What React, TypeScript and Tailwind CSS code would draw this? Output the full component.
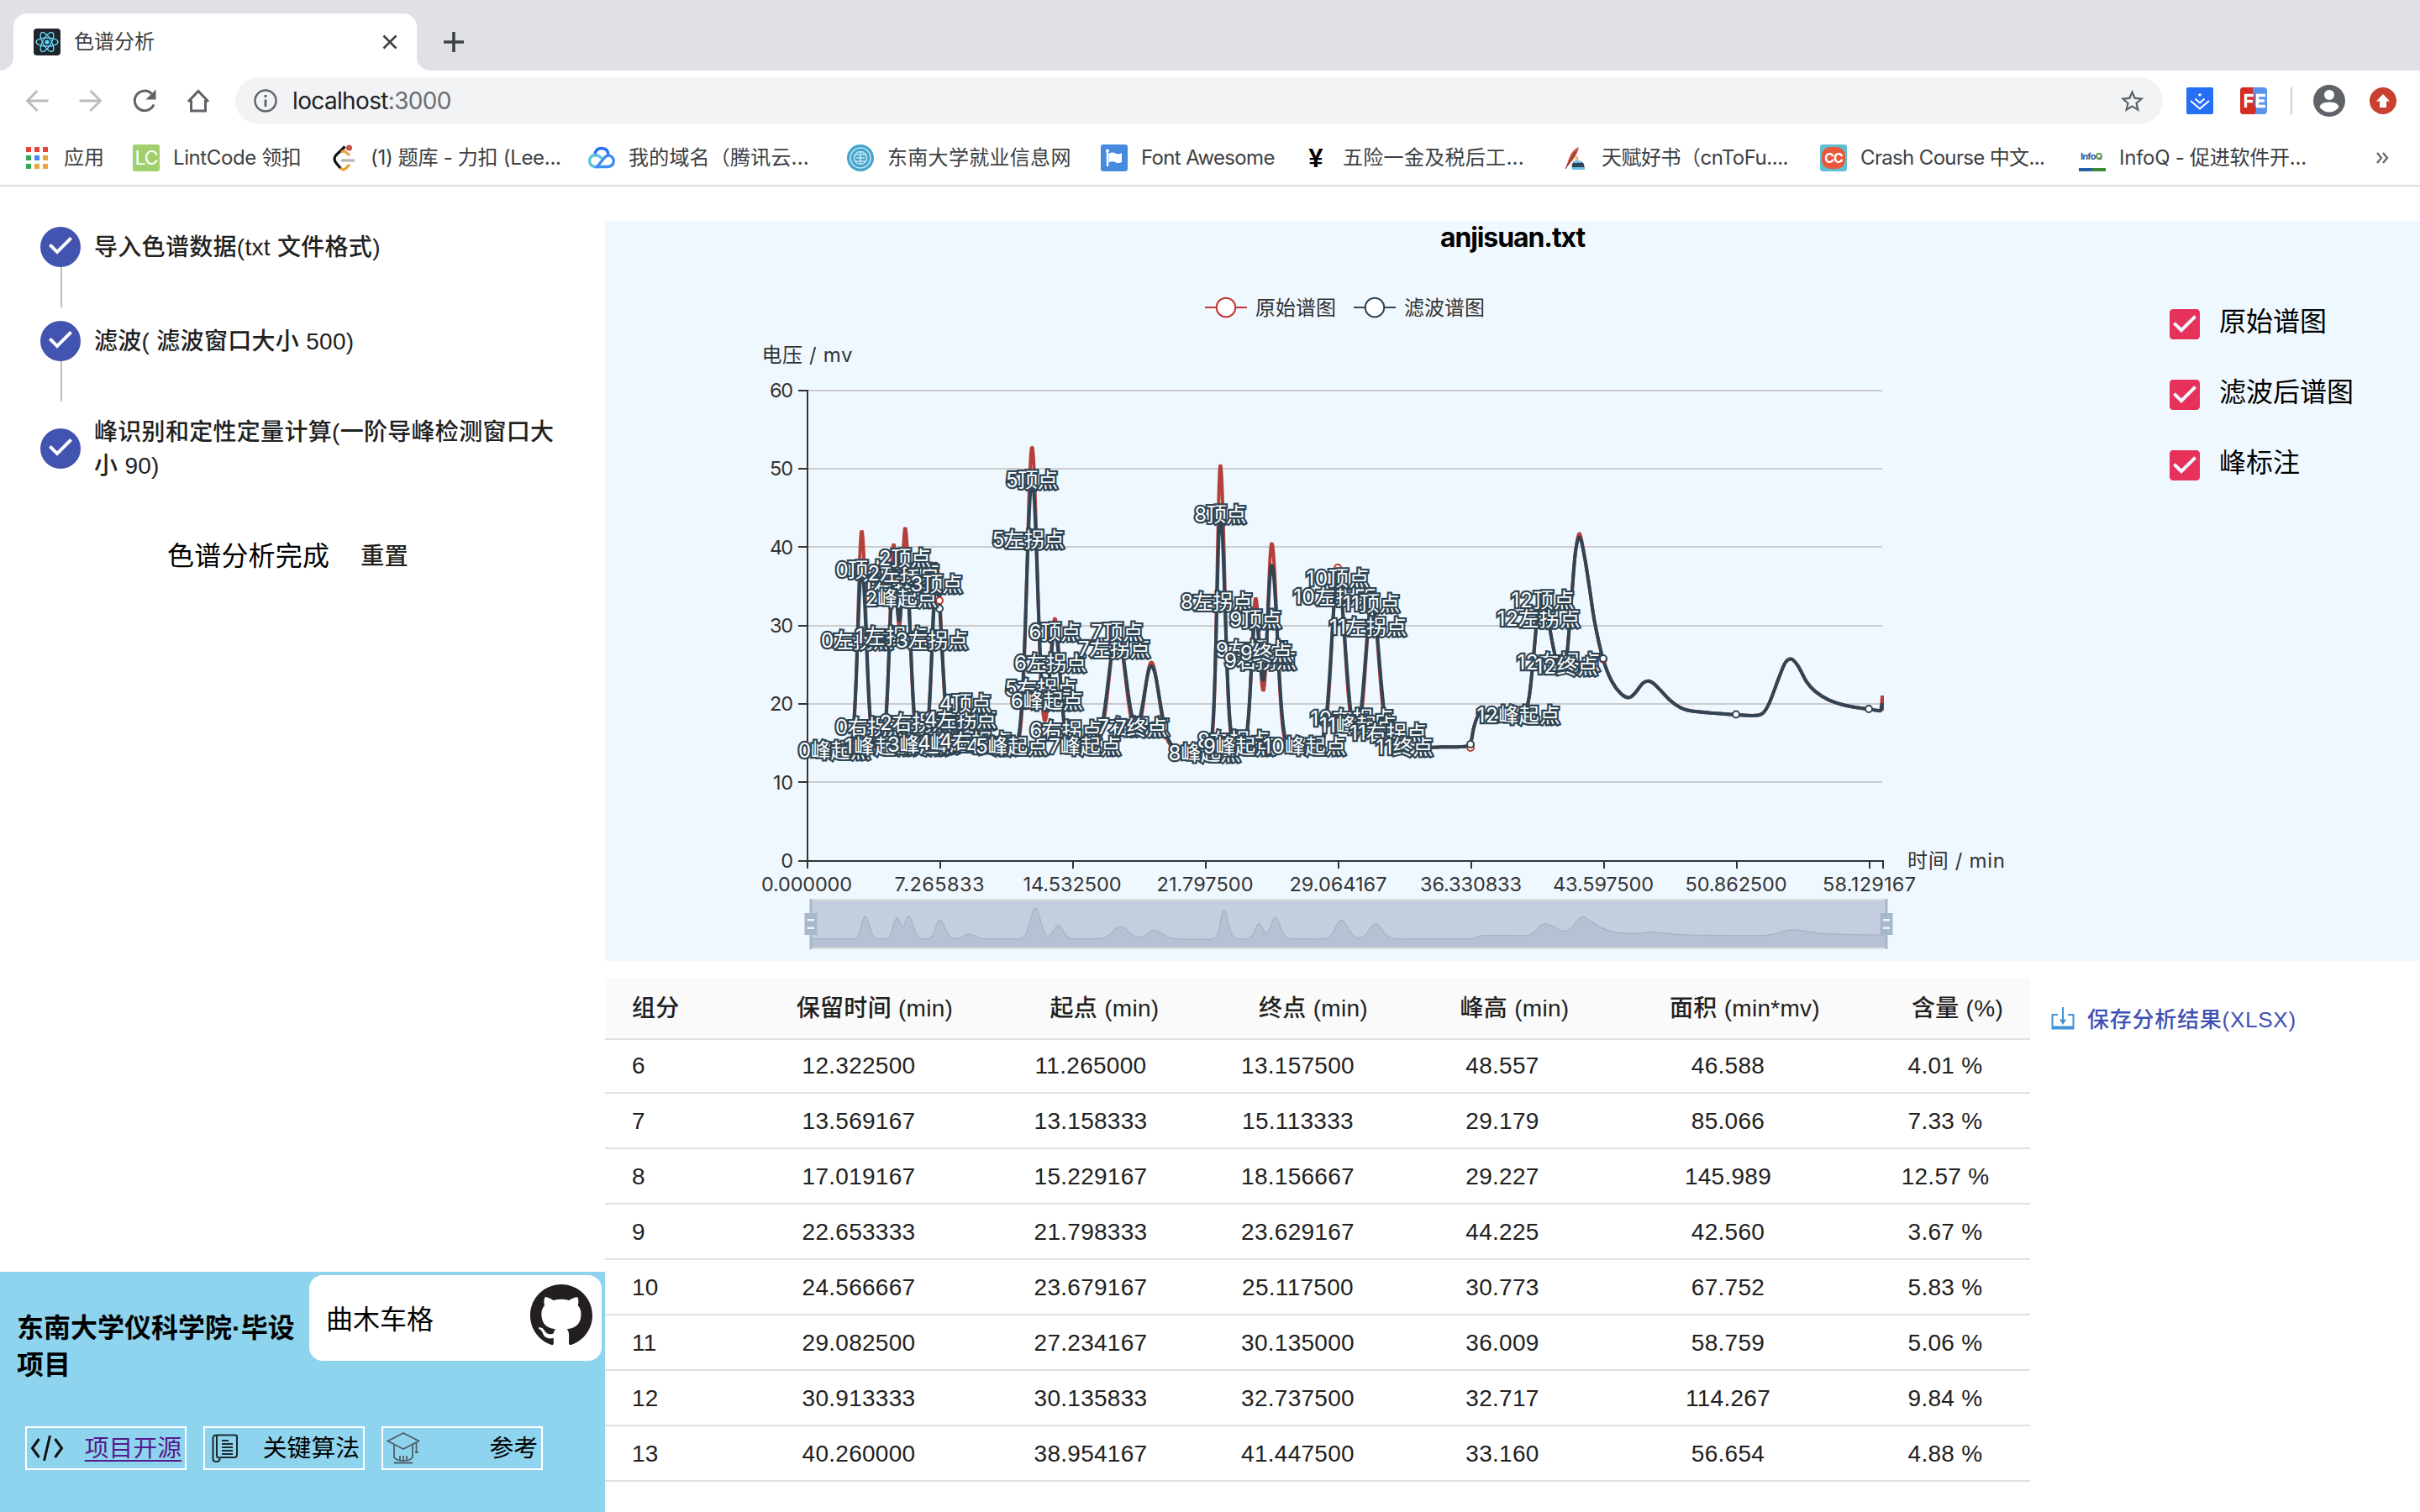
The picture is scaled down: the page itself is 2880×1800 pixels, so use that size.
import React from "react";

/* ---------- chromatogram data ---------- */

type Peak = { x: number; red: number; navy: number; l: number; r: number };

const PEAKS: Peak[] = [
  { x: 1025.5, red: 42.1, navy: 37.4, l: 4.6, r: 5.2 },
  { x: 1063.5, red: 40.2, navy: 36.3, l: 4.8, r: 4.6 },
  { x: 1077.3, red: 42.3, navy: 38.3, l: 4.6, r: 5.6 },
  { x: 1114.4, red: 38, navy: 35.4, l: 5, r: 6.4 },
  { x: 1148.8, red: 20.3, navy: 20, l: 6.5, r: 8 },
  { x: 1228.2, red: 52.8, navy: 48.6, l: 6.2, r: 6.4 },
  { x: 1255.4, red: 30.9, navy: 29.2, l: 6, r: 6.2 },
  { x: 1329.3, red: 29.5, navy: 29.2, l: 9.6, r: 10.4 },
  { x: 1370.2, red: 25.3, navy: 24.8, l: 8.6, r: 9.4 },
  { x: 1452.3, red: 50.4, navy: 44.2, l: 4, r: 5.3 },
  { x: 1494.3, red: 33.4, navy: 30.8, l: 4.9, r: 5.3 },
  { x: 1513.5, red: 40.4, navy: 37.6, l: 5.3, r: 6.4 },
  { x: 1592.1, red: 37.4, navy: 36, l: 7.2, r: 8.4 },
  { x: 1632.8, red: 33, navy: 32.7, l: 7.6, r: 8.4 },
];

const TAIL: [number, number][] = [
  [1716, 14.5], [1735, 14.5], [1749, 14.8], [1754, 17], [1760, 18.6], [1772, 18.8], [1790, 18.7], [1808, 18.6],
  [1815, 19], [1820, 21], [1825, 26], [1830, 31.5], [1835, 33.4], [1841, 31.5], [1848, 27.5], [1854, 24.8],
  [1860, 24.4], [1865, 26.5], [1871, 34.5], [1875, 39.4], [1880, 41.2], [1886, 38.6], [1892, 34.5], [1898, 30.3],
  [1907.8, 25.7], [1918, 22.9], [1929, 21.3], [1938.6, 20.8], [1946, 21.4], [1955, 22.6], [1962, 22.9], [1970, 22.4],
  [1987, 20.5], [2000, 19.5], [2012, 19.1], [2040, 18.8], [2066, 18.6], [2088, 18.5], [2098, 18.8], [2106, 20.2],
  [2118, 23.6], [2125, 25.3], [2132, 25.7], [2140, 24.8], [2150, 22.8], [2160, 21.6], [2176, 20.5], [2196, 19.8],
  [2224, 19.3], [2238, 19.1],
];

const yOf = (v: number) => 1024.5 - v * 9.333;

function valueAt(x: number, kind: "red" | "navy") {
  const base = x < 1400 ? 14.3 : x < 1440 ? 14.1 : 14.4;
  const widen = kind === "red" ? 0.95 : 1.04;
  let v = base;
  for (const p of PEAKS) {
    const s = (x < p.x ? p.l : p.r) * widen;
    v += (p[kind] - 14.3) * Math.exp(-0.5 * ((x - p.x) / s) ** 2);
  }
  return v;
}

function curve(kind: "red" | "navy", fx: (x: number) => number, fy: (v: number) => number) {
  const parts: string[] = [];
  for (let x = 961; x <= 1700; x += 0.75) {
    parts.push(`${parts.length ? "L" : "M"}${fx(x).toFixed(2)} ${fy(valueAt(x, kind)).toFixed(2)}`);
  }
  const lift = (v: number) => (kind === "red" && v > 40 ? v + 0.5 : v);
  const pts = TAIL.map(([x, v]) => [fx(x), fy(lift(v))]);
  parts.push(`L${pts[0][0]} ${pts[0][1]}`);
  for (let i = 0; i < pts.length - 1; i++) {
    const a = pts[Math.max(i - 1, 0)];
    const b = pts[i];
    const c = pts[i + 1];
    const d = pts[Math.min(i + 2, pts.length - 1)];
    parts.push(
      `C${b[0] + (c[0] - a[0]) / 6} ${b[1] + (c[1] - a[1]) / 6} ${c[0] - (d[0] - b[0]) / 6} ${c[1] - (d[1] - b[1]) / 6} ${c[0]} ${c[1]}`
    );
  }
  return parts.join("");
}

const id = (x: number) => x;
const RED = curve("red", id, yOf);
const NAVY = curve("navy", id, yOf);
const SLIDER = curve("red", (x) => x + 4, (v) => 1131.6 - v * 0.96);

const MARKS: [string, number, number][] = [
  ["0峰起点", 993, 893], ["0左拐点", 1020, 762], ["0顶点", 1025.5, 678], ["0右拐点", 1037, 865],
  ["1峰起点", 1048, 888], ["1左拐点", 1061, 757], ["1顶点", 1063.5, 687], ["1右拐点", 1070.5, 697],
  ["1终点", 1084, 680], ["2峰起点", 1072.5, 712], ["2左拐点", 1075.6, 682], ["2顶点", 1077, 664],
  ["2右拐点", 1090, 860], ["2终点", 1098, 888], ["3峰起点", 1099, 886], ["3左拐点", 1109, 762],
  ["3顶点", 1114.5, 695], ["3右拐点", 1143, 857], ["4峰起点", 1135, 884], ["4左拐点", 1143, 856],
  ["4顶点", 1148.8, 837], ["4右拐点", 1161, 882], ["4终点", 1181, 888], ["5峰起点", 1204, 888],
  ["5左拐点", 1223.7, 642], ["5顶点", 1228, 571], ["5右拐点", 1239, 819], ["5终点", 1244, 834],
  ["6峰起点", 1246, 834], ["6左拐点", 1250, 789], ["6顶点", 1255.4, 752], ["6右拐点", 1268.4, 869],
  ["7峰起点", 1291, 888], ["7左拐点", 1326, 772], ["7顶点", 1329.6, 752], ["7右拐点", 1349, 865],
  ["7终点", 1358, 866], ["8峰起点", 1433.6, 896], ["8左拐点", 1448, 716], ["8顶点", 1452.3, 612],
  ["8右拐点", 1468, 881], ["9峰起点", 1475, 888], ["9左拐点", 1490, 773], ["9顶点", 1494.3, 737],
  ["9右拐点", 1500, 786], ["9终点", 1507, 777], ["10峰起点", 1552.6, 888], ["10左拐点", 1588.7, 710],
  ["10顶点", 1592, 688], ["10右拐点", 1609, 855], ["11峰起点", 1616, 863], ["11左拐点", 1628, 746],
  ["11顶点", 1632, 718], ["11右拐点", 1652, 872], ["11终点", 1671.6, 889], ["12峰起点", 1807, 851],
  ["12左拐点", 1831, 736], ["12顶点", 1836, 714], ["12右拐点", 1855, 788], ["12终点", 1864, 793],
];

const X_TICKS: [number, string, number][] = [
  [960, "0.000000", 108], [1118, "7.265833", 107], [1276, "14.532500", 117], [1434, "21.797500", 115],
  [1592.500, "29.064167", 116], [1750.500, "36.330833", 121], [1908, "43.597500", 120], [2066, "50.862500", 121],
  [2224.500, "58.129167", 111],
];

const DOTS: [number, number, string][] = [
  [1118, 715, "#c23531"], [1592, 676, "#c23531"], [1750, 890, "#c23531"], [1908, 785, "#c23531"],
  [1118, 724.5, "#2f4554"], [1750, 886, "#2f4554"], [1908, 784, "#2f4554"], [2066, 850.5, "#2f4554"],
  [2224, 844, "#2f4554"],
];

function Handle({ x }: { x: number }) {
  return (
    <g>
      <rect x={x - 1.5} y={1070} width={3} height={60} fill="#a7b7cc" />
      <rect x={x - 7.5} y={1087} width={15} height={26} fill="#a7b7cc" />
      <rect x={x - 4} y={1094} width={8} height={2.5} fill="#eef3fa" />
      <rect x={x - 4} y={1103.5} width={8} height={2.5} fill="#eef3fa" />
    </g>
  );
}

function Chart() {
  return (
    <svg
      viewBox="720 308 1856 836"
      className="h-[836px] w-[1856px] shrink-0 font-['Inter','Noto_Sans_CJK_SC',sans-serif] text-[24px]"
    >
      <g strokeWidth={2} fill="#fff">
        <path d="M1434 366h50" stroke="#c23531" />
        <circle cx={1459} cy={366} r={11.3} stroke="#c23531" />
        <path d="M1611 366h50" stroke="#2f4554" />
        <circle cx={1636} cy={366} r={11.3} stroke="#2f4554" />
      </g>
      <g fill="#333">
        <text x={1494} y={375}>原始谱图</text>
        <text x={1671} y={375}>滤波谱图</text>
        <text x={960.5} y={431} textAnchor="middle" textLength={108}>电压 / mv</text>
        <text x={2270} y={1033} textLength={116}>时间 / min</text>
      </g>

      {[10, 20, 30, 40, 50, 60].map((v) => (
        <path key={v} d={`M961 ${Math.round(1024.5 - v * 9.333)}h1279`} stroke="#ccc" strokeWidth={2} />
      ))}
      <path
        d="M961 464V1034M950 1025H2241M950 931h11M950 838h11M950 745h11M950 651h11M950 558h11M950 465h11M1119 1025v9M1277 1025v9M1435 1025v9M1593 1025v9M1751 1025v9M1909 1025v9M2067 1025v9M2225 1025v9M2241 1024v10"
        stroke="#333"
        strokeWidth={2}
        fill="none"
      />
      <g fill="#333" fontSize={23.5}>
        {[0, 10, 20, 30, 40, 50, 60].map((v) => (
          <text key={v} x={944} y={1033 - v * 9.333} textAnchor="end" textLength={v === 0 ? 14 : v === 10 ? 24 : 28}>
            {v}
          </text>
        ))}
        {X_TICKS.map(([x, t, w]) => (
          <text key={t} x={x} y={1061} textAnchor="middle" textLength={w}>
            {t}
          </text>
        ))}
      </g>

      <path d={`${RED}L2239 845L2240 828V846`} fill="none" stroke="#b5403a" strokeWidth={4} strokeLinejoin="bevel" />
      <path d={`${NAVY}L2240 837`} fill="none" stroke="#2f4554" strokeWidth={4} strokeLinejoin="bevel" />
      {DOTS.map(([x, y, c], i) => (
        <circle key={i} cx={x} cy={y} r={4} fill="#fff" stroke={c} strokeWidth={2} />
      ))}
      <g
        fill="#fff"
        stroke="#2f4554"
        strokeWidth={4.5}
        strokeLinejoin="miter"
        paintOrder="stroke"
        textAnchor="middle"
      >
        {MARKS.map(([t, x, y]) => (
          <text key={t} x={x} y={y + 8.5} textLength={t.length * 24 - (/^\d\d/.test(t) ? (t.startsWith("11") ? 28 : 21) : 10)}>
            {t}
          </text>
        ))}
      </g>

      <rect x={965} y={1071} width={1280} height={58} fill="#c5cedf" stroke="#ddd" strokeWidth={2} />
      <path d={`${SLIDER}L2244 1113V1128H966Z`} fill="#b6c2d3" />
      <path d={SLIDER} fill="none" stroke="#a3b2c4" strokeWidth={1.2} />
      <Handle x={965} />
      <Handle x={2245} />
    </svg>
  );
}

/* ---------- browser chrome ---------- */

function TabStrip() {
  return (
    <div className="flex h-[84px] items-end bg-[#dfe1e7]">
      <div className="h-4 w-4 bg-white">
        <div className="h-full w-full rounded-br-2xl bg-[#dfe1e7]" />
      </div>
      <div className="flex h-[68px] w-[480px] items-center rounded-t-2xl bg-white pr-[22px] pl-6">
        <svg viewBox="0 0 32 32" className="h-8 w-8">
          <rect width="32" height="32" rx="4" fill="#20232a" />
          <g fill="none" stroke="#61dafb" strokeWidth="1.4">
            <ellipse cx="16" cy="16" rx="13" ry="5" />
            <ellipse cx="16" cy="16" rx="13" ry="5" transform="rotate(60 16 16)" />
            <ellipse cx="16" cy="16" rx="13" ry="5" transform="rotate(120 16 16)" />
          </g>
          <circle cx="16" cy="16" r="2.6" fill="#61dafb" />
        </svg>
        <span className="ml-4 flex-1 text-[24px] leading-none text-[#3c4043]">色谱分析</span>
        <svg viewBox="0 0 20 20" className="h-5 w-5">
          <path d="M2.5 2.5l15 15M17.500 2.500l-15 15" stroke="#3c4043" strokeWidth="2.600" />
        </svg>
      </div>
      <div className="h-4 w-4 bg-white">
        <div className="h-full w-full rounded-bl-2xl bg-[#dfe1e7]" />
      </div>
      <svg viewBox="0 0 24 24" className="mb-[22px] ml-4 h-6 w-6">
        <path d="M12 0v24M0 12h24" stroke="#3c4043" strokeWidth="3.6" />
      </svg>
    </div>
  );
}

function Toolbar() {
  return (
    <div className="flex h-[72px] items-center bg-white">
      <div className="flex w-[280px] items-center gap-8 pl-7">
        <svg viewBox="0 0 32 32" className="h-8 w-8" fill="none" stroke="#b9bbbe" strokeWidth="2.8">
          <path d="M29.500 16H5M16.500 4L4.500 16l12 12" />
        </svg>
        <svg viewBox="0 0 32 32" className="h-8 w-8" fill="none" stroke="#b9bbbe" strokeWidth="2.8">
          <path d="M2.500 16H27M15.500 4l12 12-12 12" />
        </svg>
        <svg viewBox="0 0 32 32" className="h-8 w-8" fill="none" stroke="#5f6368" strokeWidth="3">
          <path d="M27 20.500A11.800 11.800 0 1 1 24.500 7.600" />
          <path d="M29.500 2.500v12h-12z" fill="#5f6368" stroke="none" />
        </svg>
        <svg viewBox="0 0 32 32" className="h-8 w-8" fill="none" stroke="#5f6368" strokeWidth="3">
          <path d="M4 17L16 4.500 28 17M7.500 15v13h17V15" />
        </svg>
      </div>
      <div className="flex h-14 w-[2294px] items-center rounded-full bg-[#f1f3f4] pr-5 pl-[22px]">
        <svg viewBox="0 0 28 28" className="h-7 w-7">
          <circle cx="14" cy="14" r="12.500" fill="none" stroke="#5f6368" strokeWidth="2.400" />
          <path d="M14 12.500v8.500M14 7v3" stroke="#5f6368" strokeWidth="2.800" />
        </svg>
        <span className="ml-[18px] flex-1 text-[28px] leading-none tracking-[-0.65px] text-[#202124]">
          localhost<span className="text-[#6b6f74]">:3000</span>
        </span>
        <svg viewBox="0 0 24 24" className="h-[33px] w-[33px]">
          <path
            fill="#5f6368"
            d="M22 9.240l-7.190-.62L12 2 9.190 8.630 2 9.240l5.460 4.730L5.820 21 12 17.270 18.180 21l-1.630-7.030L22 9.240zM12 15.400l-3.760 2.270 1-4.280-3.320-2.880 4.380-.38L12 6.100l1.710 4.040 4.380.38-3.320 2.880 1 4.280L12 15.400z"
          />
        </svg>
      </div>
      <div className="flex flex-1 items-center pl-7">
        <svg viewBox="0 0 32 32" className="h-8 w-8" fill="none" stroke="#fff" strokeWidth="2">
          <rect width="32" height="32" rx="2" fill="#256ff5" stroke="none" />
          <path d="M5 16l11 9.500L27 16M10.500 13.500L16 18.500l5.500-5" />
          <circle cx="16" cy="9" r="1.800" fill="#fff" stroke="none" />
        </svg>
        <svg viewBox="0 0 32 32" className="ml-8 h-8 w-8">
          <rect width="32" height="32" rx="4" fill="#5a93ee" />
          <path d="M4 0h12q-3 4 1 8v14q4 4 0 10H4q-4 0-4-4V4q0-4 4-4z" fill="#d62d20" />
          <path d="M6.500 24V9.500H16M6.500 16.500H15M30 9.500H20.500V22.500H30M20.500 16H29" fill="none" stroke="#fff" strokeWidth="3.400" />
        </svg>
        <div className="ml-7 h-8 w-0.5 bg-[#cfd1d4]" />
        <svg viewBox="0 0 38 38" className="ml-[25px] h-[38px] w-[38px]">
          <circle cx="19" cy="19" r="19" fill="#5f6368" />
          <circle cx="19" cy="12" r="6" fill="#fff" />
          <path d="M7.500 26.500q1-6 11.500-6t11.500 6q-4.500 6-11.500 6t-11.500-6z" fill="#fff" />
        </svg>
        <svg viewBox="0 0 32 32" className="ml-[29px] h-8 w-8">
          <circle cx="16" cy="16" r="16" fill="#c8402f" />
          <path d="M16 8l8 8.500h-4V24h-8v-7.500H8z" fill="#fff" />
        </svg>
      </div>
    </div>
  );
}

const AppsIcon = (
  <svg viewBox="0 0 32 32" className="h-8 w-8">
    {["#e94235", "#e94235", "#e94235", "#34a853", "#4285f4", "#eba53a", "#34a853", "#eba53a", "#eba53a"].map((c, i) => (
      <rect key={i} x={3 + (i % 3) * 10} y={3 + Math.floor(i / 3) * 10} width="6" height="6" fill={c} />
    ))}
  </svg>
);

const LintIcon = (
  <div className="flex h-8 w-8 items-center justify-center rounded-[3px] bg-[#a2cf6e] text-[23px] leading-none tracking-[-1px] text-white">
    LC
  </div>
);

const LeetIcon = (
  <svg viewBox="0 0 32 32" className="h-8 w-8" fill="none" strokeWidth="3.200">
    <path d="M17.500 2.500L7 12.500q-4 4.500 0 9.500l5.500 6.500" stroke="#111" />
    <path d="M12 28q3 3 6 1l5-5M13 9l3.500-1.500L23 13" stroke="#eba13c" />
    <path d="M13 19h16" stroke="#b3b3b3" />
    <circle cx="22.500" cy="4" r="3.500" fill="#c4524b" />
  </svg>
);

const CloudIcon = (
  <svg viewBox="0 0 32 32" className="h-8 w-8" fill="none" strokeWidth="3.400">
    <path d="M8 13q0-8.500 8-8.500T24 13" stroke="#2a6df4" />
    <path d="M14 26.500H9q-7.300-.5-7.300-7T9 12.800q4 0 7 4" stroke="#5cc5dd" />
    <path d="M10.500 26.500L20 15q3-2.500 6-1.500 4.500 2 4.300 6.500-.5 6-7 6.500z" stroke="#3f8df5" />
  </svg>
);

const GlobeIcon = (
  <svg viewBox="0 0 32 32" className="h-8 w-8" fill="none" stroke="#bfe6f3" strokeWidth="1.600">
    <circle cx="16" cy="16" r="16" fill="#45a3cc" stroke="none" />
    <circle cx="16" cy="16" r="12" />
    <circle cx="16" cy="16" r="7.500" />
    <path d="M9 12h14M9 20h14M16 9v14M11 16h10" />
  </svg>
);

const FlagIcon = (
  <svg viewBox="0 0 32 32" className="h-8 w-8">
    <rect width="32" height="32" rx="3" fill="#448ade" />
    <path d="M8 8v18" stroke="#fff" strokeWidth="2.400" />
    <circle cx="8" cy="7.500" r="2" fill="#fff" />
    <path d="M9.500 11q4-2.500 8-.5t7.500-.5v11q-4 2-7.500.2t-8 .3z" fill="#fff" />
  </svg>
);

const YenIcon = (
  <div className="flex h-8 w-8 items-center justify-center font-['Liberation_Sans',sans-serif] text-[31px] leading-none font-bold text-black">
    ¥
  </div>
);

const QuillIcon = (
  <svg viewBox="0 0 32 32" className="h-8 w-8">
    <path d="M21 3q-8 3-12 14L5 29l9-11q5-6 7-15z" fill="#c9523f" />
    <path d="M5 29L17 9" stroke="#5d2a20" strokeWidth="1" />
    <path d="M17 14l3 0 1 6h-4z" fill="#e9b894" />
    <path d="M14 21h11q3 2 2.500 8.500H13q-1-5 1-8.500z" fill="#2f4257" />
    <path d="M13 27h15v3H13z" fill="#66bde8" />
    <path d="M14 19.500h10v2.500H14z" fill="#66bde8" />
  </svg>
);

const CcIcon = (
  <div className="flex h-8 w-8 items-center justify-center rounded-[3px] bg-[#5dc0d2]">
    <div className="flex h-[26px] w-7 items-center justify-center rounded-[10px] bg-[#e9573f] text-[16px] leading-none font-bold tracking-[-1px] text-white">
      CC
    </div>
  </div>
);

const InfoIcon = (
  <div className="flex h-8 w-8 flex-col justify-end text-[11px] leading-none font-bold tracking-[-0.8px] text-[#255b9c]">
    <span className="pl-0.5">
      Info<span className="text-[#3d8a3b]">Q</span>
    </span>
    <div className="mt-2 flex h-1">
      <div className="flex-1 bg-[#2b60a0]" />
      <div className="flex-1 bg-[#3d8a3b]" />
    </div>
  </div>
);

function Bookmark({ icon, children, className }: { icon: React.ReactNode; children: React.ReactNode; className: string }) {
  return (
    <div className={`flex shrink-0 items-center gap-4 whitespace-nowrap ${className}`}>
      {icon}
      <span className="leading-none">{children}</span>
    </div>
  );
}

function Bookmarks() {
  return (
    <div className="flex h-[66px] items-center border-b-2 border-[#dcdce3] bg-white pl-7 text-[24px] text-[#3c4043]">
      <Bookmark icon={AppsIcon} className="w-[130px]">应用</Bookmark>
      <Bookmark icon={LintIcon} className="w-[235px] tracking-[-0.4px]">LintCode 领扣</Bookmark>
      <Bookmark icon={LeetIcon} className="w-[307px] tracking-[-0.3px]">(1) 题库 - 力扣 (Lee...</Bookmark>
      <Bookmark icon={CloudIcon} className="w-[308px] tracking-[0.2px]">我的域名（腾讯云...</Bookmark>
      <Bookmark icon={GlobeIcon} className="w-[302px] tracking-[0.3px]">东南大学就业信息网</Bookmark>
      <Bookmark icon={FlagIcon} className="w-[240px] tracking-[-0.65px]">Font Awesome</Bookmark>
      <Bookmark icon={YenIcon} className="w-[308px] tracking-[0.3px]">五险一金及税后工...</Bookmark>
      <Bookmark icon={QuillIcon} className="w-[308px] tracking-[-0.5px]">天赋好书（cnToFu....</Bookmark>
      <Bookmark icon={CcIcon} className="w-[308px] tracking-[-0.65px]">Crash Course 中文...</Bookmark>
      <Bookmark icon={InfoIcon} className="w-[353px] tracking-[-0.25px]">InfoQ - 促进软件开...</Bookmark>
      <svg viewBox="0 0 16 16" className="h-4 w-4" fill="none" stroke="#5f6368" strokeWidth="2.200">
        <path d="M2 2l5 6-5 6M9 2l5 6-5 6" />
      </svg>
    </div>
  );
}

/* ---------- side panel ---------- */

function StepIcon() {
  return (
    <svg viewBox="0 0 24 24" className="h-12 w-12 shrink-0">
      <circle cx="12" cy="12" r="12" fill="#4253b0" />
      <path d="M10 16.400l-5-5 1.400-1.400 3.600 3.600 7.600-7.600L19 7.400z" fill="#fff" />
    </svg>
  );
}

function Step({ children }: { children: React.ReactNode }) {
  return (
    <div className="flex items-center gap-4">
      <StepIcon />
      <span className="translate-y-px text-[28px] leading-[40px] font-medium tracking-[0.3px] text-[#212121]">{children}</span>
    </div>
  );
}

function Connector() {
  return <div className="mb-4 ml-6 h-12 w-0.5 bg-[#bdbdbd]" />;
}

function FooterButton({ icon, children, link }: { icon: React.ReactNode; children: React.ReactNode; link?: boolean }) {
  return (
    <div className="flex h-[52px] w-48 items-center justify-between border-2 border-white px-1">
      {icon}
      <span className={`text-[28.8px] leading-none ${link ? "text-[#551a8b] underline decoration-2 underline-offset-4" : "text-black"}`}>
        {children}
      </span>
    </div>
  );
}

function Footer() {
  return (
    <div className="mt-auto h-[286px] bg-[#8fd4ee] pt-1">
      <div className="flex h-[180px]">
        <h2 className="w-[346px] shrink-0 pt-[41px] pl-5 text-[32px] leading-[44px] font-bold whitespace-nowrap text-black">
          东南大学仪科学院·毕设
          <br />
          项目
        </h2>
        <div className="ml-[22px] flex h-[102px] w-[348px] items-center justify-between rounded-2xl bg-white pr-[11px] pl-5">
          <span className="pt-1 text-[32px] leading-none text-black">曲木车格</span>
          <svg viewBox="0 0 24 24" className="mt-[-8px] h-[74px] w-[74px]">
            <path
              fill="#231f20"
              d="M12 .297c-6.630 0-12 5.373-12 12 0 5.303 3.438 9.800 8.205 11.385.6.113.82-.258.82-.577 0-.285-.01-1.040-.015-2.040-3.338.724-4.042-1.610-4.042-1.610C4.422 18.070 3.633 17.700 3.633 17.700c-1.087-.744.084-.729.084-.729 1.205.084 1.838 1.236 1.838 1.236 1.070 1.835 2.809 1.305 3.495.998.108-.776.417-1.305.76-1.605-2.665-.3-5.466-1.332-5.466-5.930 0-1.310.465-2.380 1.235-3.220-.135-.303-.54-1.523.105-3.176 0 0 1.005-.322 3.300 1.230.96-.267 1.980-.399 3-.405 1.020.006 2.040.138 3 .405 2.280-1.552 3.285-1.230 3.285-1.230.645 1.653.24 2.873.12 3.176.765.84 1.230 1.910 1.230 3.220 0 4.610-2.805 5.625-5.475 5.920.42.36.81 1.096.81 2.220 0 1.606-.015 2.896-.015 3.286 0 .315.21.69.825.57C20.565 22.092 24 17.592 24 12.297c0-6.627-5.373-12-12-12"
            />
          </svg>
        </div>
      </div>
      <div className="flex gap-5 pl-[30px]">
        <FooterButton
          link
          icon={
            <svg viewBox="0 0 40 40" className="h-10 w-10" fill="none" stroke="#111" strokeWidth="3">
              <path d="M10.500 9L2.500 20l8 11M29.500 9l8 11-8 11M23.500 5l-7 30" />
            </svg>
          }
        >
          项目开源
        </FooterButton>
        <FooterButton
          icon={
            <svg viewBox="0 0 40 40" className="h-10 w-10" fill="none" stroke="#1c2a30" strokeWidth="2">
              <path d="M10 4.500h22q2 0 2 2V28q0 3-3 3H14M10 4.500Q5.500 4.500 5.500 8v25q0 3 4 3t4-3q0-2.500-4-2.500M10 5v25M16 11h8M16 15h13M16 19h13M16 23h13M16 27h13" />
            </svg>
          }
        >
          关键算法
        </FooterButton>
        <FooterButton
          icon={
            <svg viewBox="0 0 40 40" className="h-10 w-10" fill="none" stroke="#4e6068" strokeWidth="1.800">
              <path d="M20 2L1.500 11.500 20 21l18.500-9.500zM9 16v15q3 4 11 4t11-4V16M35.500 13v12M34 25h3v-1M16 29v5M20 29v6M24 29v5M9 37.500h22" />
            </svg>
          }
        >
          参考
        </FooterButton>
      </div>
    </div>
  );
}

function Sidebar() {
  return (
    <div className="flex w-[720px] shrink-0 flex-col">
      <div className="pt-12 pr-12 pl-12">
        <Step>导入色谱数据(txt 文件格式)</Step>
        <Connector />
        <Step>滤波( 滤波窗口大小 500)</Step>
        <Connector />
        <Step>峰识别和定性定量计算(一阶导峰检测窗口大小 90)</Step>
      </div>
      <div className="mt-[66px] flex items-center pl-[199px]">
        <span className="text-[32px] leading-[44px] tracking-[0.2px] text-black">色谱分析完成</span>
        <span className="ml-[37px] translate-y-px text-[28px] leading-[44px] font-medium tracking-[0.6px] text-[#212121]">重置</span>
      </div>
      <Footer />
    </div>
  );
}

/* ---------- results ---------- */

const HEAD: [string, string][] = [
  ["保留时间 (min)", "pl-[38px]"], ["起点 (min)", "pl-[33px]"], ["终点 (min)", "pl-[37px]"],
  ["峰高 (min)", "pl-[29px]"], ["面积 (min*mv)", "pl-[40px]"], ["含量 (%)", "pl-[29px]"],
];

const ROWS = [
  ["6", "12.322500", "11.265000", "13.157500", "48.557", "46.588", "4.01 %"],
  ["7", "13.569167", "13.158333", "15.113333", "29.179", "85.066", "7.33 %"],
  ["8", "17.019167", "15.229167", "18.156667", "29.227", "145.989", "12.57 %"],
  ["9", "22.653333", "21.798333", "23.629167", "44.225", "42.560", "3.67 %"],
  ["10", "24.566667", "23.679167", "25.117500", "30.773", "67.752", "5.83 %"],
  ["11", "29.082500", "27.234167", "30.135000", "36.009", "58.759", "5.06 %"],
  ["12", "30.913333", "30.135833", "32.737500", "32.717", "114.267", "9.84 %"],
  ["13", "40.260000", "38.954167", "41.447500", "33.160", "56.654", "4.88 %"],
];

function ResultTable() {
  return (
    <div className="w-[1696px] font-['Liberation_Sans','Noto_Sans_CJK_SC',sans-serif] text-[28px] leading-[40px] tracking-[0.28px] text-[#212121]">
      <div className="relative z-10 -mb-0.5 grid h-[74px] grid-cols-[140px_324px_228px_265px_222px_315px_202px] items-center border-b-2 border-[#e0e0e0] bg-[#fafafa] pt-0.5 font-medium whitespace-nowrap">
        <div className="pl-8">组分</div>
        {HEAD.map(([t, pad]) => (
          <div key={t} className={`text-center ${pad}`}>{t}</div>
        ))}
      </div>
      {ROWS.map((r) => (
        <div
          key={r[0]}
          className="grid h-[66px] grid-cols-[140px_324px_228px_265px_222px_315px_202px] items-center border-b-2 border-[#e0e0e0] pt-0.5"
        >
          {r.map((c, i) => (
            <div key={i} className={i === 0 ? "pl-8" : "text-center"}>{c}</div>
          ))}
        </div>
      ))}
    </div>
  );
}

function Toggle({ children }: { children: React.ReactNode }) {
  return (
    <div className="flex h-[84px] items-center">
      <svg viewBox="0 0 24 24" className="h-12 w-12">
        <path
          fill="#e6325a"
          d="M19 3H5c-1.110 0-2 .9-2 2v14c0 1.100.89 2 2 2h14c1.110 0 2-.9 2-2V5c0-1.100-.89-2-2-2zm-9 14l-5-5 1.410-1.410L10 14.170l7.590-7.590L19 8l-9 9z"
        />
      </svg>
      <span className="-mt-1.5 ml-[17px] text-[32px] leading-none text-black">{children}</span>
    </div>
  );
}

export default function App() {
  return (
    <div className="flex h-[1800px] w-[2880px] flex-col overflow-hidden bg-white font-['Inter','Noto_Sans_CJK_SC',sans-serif]">
      <TabStrip />
      <Toolbar />
      <Bookmarks />
      <div className="flex min-h-0 flex-1">
        <div className="flex font-['Liberation_Sans','Noto_Sans_CJK_SC',sans-serif]">
          <Sidebar />
        </div>
        <div className="flex w-[2160px] flex-col pt-[42px]">
          <div className="h-[880px] bg-[#f0f8ff]">
            <h1 className="h-11 text-center text-[32px] leading-[38px] font-bold tracking-[-1.1px] text-black">anjisuan.txt</h1>
            <div className="flex">
              <Chart />
              <div className="pt-9">
                <Toggle>原始谱图</Toggle>
                <Toggle>滤波后谱图</Toggle>
                <Toggle>峰标注</Toggle>
              </div>
            </div>
          </div>
          <div className="flex pt-5">
            <ResultTable />
            <div className="flex h-[98px] items-center pl-[25px] font-['Liberation_Sans','Noto_Sans_CJK_SC',sans-serif]">
              <svg viewBox="0 0 28 28" className="h-7 w-7" fill="none" stroke="#3f93d8" strokeWidth="2">
                <path d="M8 9H1.500v16.500h25V9H20M14 0v17M2 23.500h24" />
                <path d="M10 14.500h8L14 21z" fill="#3f93d8" stroke="none" />
              </svg>
              <span className="mt-px ml-[15px] text-[26px] leading-none font-medium tracking-[0.75px] whitespace-nowrap text-[#3f51b5]">
                保存分析结果(XLSX)
              </span>
            </div>
          </div>
        </div>
      </div>
    </div>
  );
}
